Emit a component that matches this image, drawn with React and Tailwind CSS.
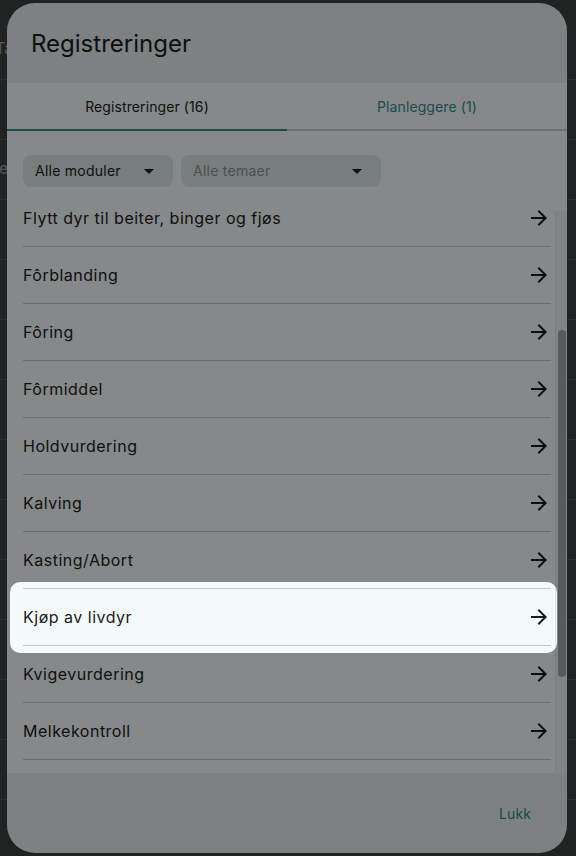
import { useState } from "react";

const bgRows = ["Oversikt Tav", "Dyr Pris", "Kontroll Lev", "Helse Dia", "", "", "", "", "", "", "", "", "", ""];

const registreringer = [
  "Flytt dyr til beiter, binger og fjøs",
  "Fôrblanding",
  "Fôring",
  "Fôrmiddel",
  "Holdvurdering",
  "Kalving",
  "Kasting/Abort",
  "Kjøp av livdyr",
  "Kvigevurdering",
  "Melkekontroll",
  "Merking",
];

const ArrowForward = () => (
  <svg viewBox="0 0 24 24" className="w-6 h-6 fill-[#191c1c]">
    <path d="M12 4l-1.41 1.41L16.17 11H4v2h12.17l-5.58 5.59L12 20l8-8z" />
  </svg>
);

const DropArrow = () => (
  <svg viewBox="0 0 24 24" className="w-6 h-6 fill-[#191c1c]">
    <path d="M7 10l5 5 5-5z" />
  </svg>
);

const App = () => {
  const [tab, setTab] = useState(0);

  return (
    <div className="relative w-[576px] h-[856px] overflow-hidden bg-[#3c4040] font-['Inter','Liberation_Sans',sans-serif]">
      {/* siden bak dialogen */}
      <div className="flex flex-col pt-[20px]">
        {bgRows.map((r, i) => (
          <div key={i} className="h-[60px] flex items-center pb-1 border-b border-[#525757] text-[#9a9f9f] text-base whitespace-nowrap">
            <span className="-ml-[72px]">{r}</span>
          </div>
        ))}
      </div>

      {/* Dialog */}
      <div className="absolute left-[7px] top-[3px] w-[560px] h-[850px] rounded-[28px] bg-[#e3ebeb] flex flex-col overflow-hidden">
        <div className="h-[80px] flex items-center pl-[24px] pt-[2px] text-[24px] text-[#191c1c]">
          Registreringer
        </div>

        <div className="flex bg-[#f4fafa] h-[48px]">
          <button
            onClick={() => setTab(0)}
            className="flex-1 flex items-center justify-center pt-[2px] text-sm tracking-[0.1px] text-[#191c1c] border-b-2 border-[#2e8a8c]"
          >
            Registreringer (16)
          </button>
          <button
            onClick={() => setTab(1)}
            className="flex-1 flex items-center justify-center pt-[2px] text-sm tracking-[0.1px] text-[#2e8a8c] border-b-2 border-[#c8d0d0]"
          >
            Planleggere (1)
          </button>
        </div>

        <div className="flex-1 flex flex-col bg-[#f4fafa] min-h-0">
          {/* Filtre */}
          <div className="flex gap-2 px-4 pt-6 pb-[3px]">
            <div className="w-[150px] h-8 rounded-lg bg-[#dae4e3] flex items-center justify-between pl-3 pr-3 text-sm tracking-[0.25px] text-[#191c1c]">
              Alle moduler
              <DropArrow />
            </div>
            <div className="w-[200px] h-8 rounded-lg bg-[#dae4e3] flex items-center justify-between pl-3 pr-3 text-sm tracking-[0.25px] text-[#8a9393]">
              Alle temaer
              <DropArrow />
            </div>
          </div>

          {/* Liste */}
          <div className="flex-1 flex min-h-0">
            <div className="flex-1 overflow-hidden pl-4 pr-1">
              {registreringer.map((r) => (
                <div key={r} className="h-[57px] flex items-center justify-between border-b border-[#c0c8c8] text-base tracking-[0.5px] text-[#1d2020]">
                  <span>{r}</span>
                  <ArrowForward />
                </div>
              ))}
            </div>
            <div className="w-[12px] mt-[21px] bg-[#ebf1f1] border-l border-[#dfe6e6] flex flex-col pl-[2px] pt-[119px]">
              <div className="w-[8px] h-[347px] rounded-full bg-[#9ba4a4]" />
            </div>
          </div>
        </div>

        <div className="h-[80px] flex items-center justify-end pr-[36px] pt-[2px] text-sm tracking-[0.1px] text-[#2e8a8c]">
          Lukk
        </div>
      </div>

      {/* Spotlight for omvisning */}
      <div className="absolute left-[10px] top-[582px] w-[547px] h-[71px] rounded-[10px] shadow-[0_0_0_9999px_rgba(0,0,0,0.45)] pointer-events-none" />
    </div>
  );
};

export default App;
